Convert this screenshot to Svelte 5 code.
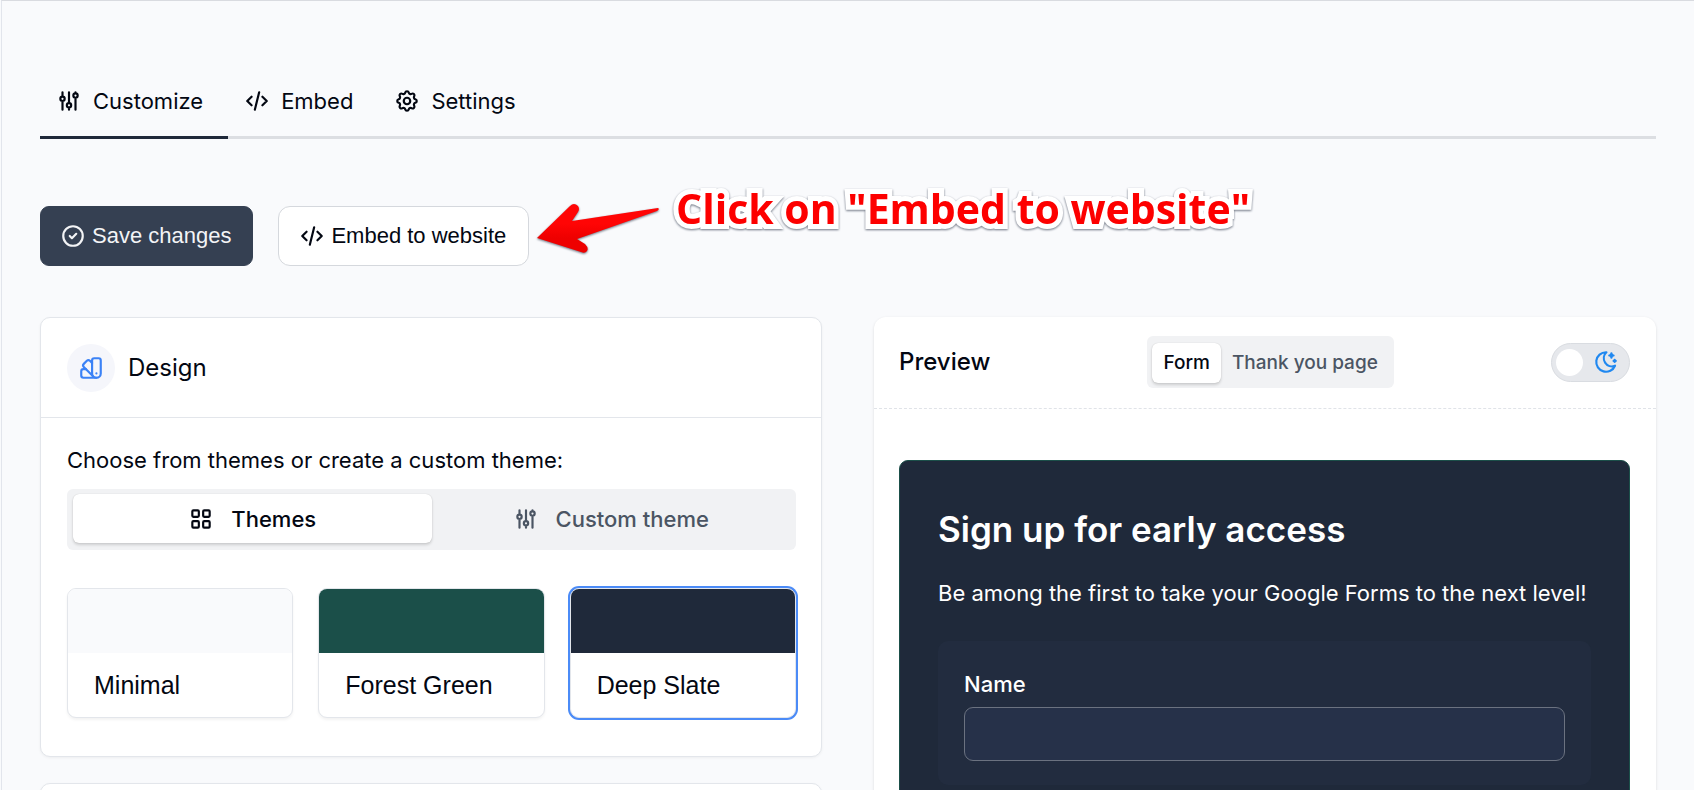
<script lang="ts">
  type IconName = "adjustments" | "code" | "settings" | "check" | "swatch" | "grid" | "moon";

  const tabs: { id: string; label: string; icon: IconName }[] = [
    { id: "customize", label: "Customize", icon: "adjustments" },
    { id: "embed", label: "Embed", icon: "code" },
    { id: "settings", label: "Settings", icon: "settings" },
  ];

  const sources: { id: string; label: string; icon: IconName }[] = [
    { id: "themes", label: "Themes", icon: "grid" },
    { id: "custom", label: "Custom theme", icon: "adjustments" },
  ];

  const themes = [
    { name: "Minimal", color: "#f9fafc" },
    { name: "Forest Green", color: "#1b4f49" },
    { name: "Deep Slate", color: "#1f293a" },
  ];

  const pages = ["Form", "Thank you page"];

  let activeTab = $state("customize");
  let source = $state("themes");
  let theme = $state("Deep Slate");
  let page = $state("Form");
  let darkMode = $state(false);
  let name = $state("");
</script>

{#snippet icon(kind: IconName)}
  <svg class="icon" viewBox="0 0 24 24" aria-hidden="true">
    {#if kind === "adjustments"}
      <path d="M4 10a2 2 0 1 0 4 0a2 2 0 0 0 -4 0M6 4v4M6 12v8" />
      <path d="M10 16a2 2 0 1 0 4 0a2 2 0 0 0 -4 0M12 4v10M12 18v2" />
      <path d="M16 7a2 2 0 1 0 4 0a2 2 0 0 0 -4 0M18 4v1M18 9v11" />
    {:else if kind === "code"}
      <path d="M7 8l-4 4l4 4M17 8l4 4l-4 4M14 4l-4 16" />
    {:else if kind === "settings"}
      <path
        d="M10.325 4.317c.426 -1.756 2.924 -1.756 3.35 0a1.724 1.724 0 0 0 2.573 1.066c1.543 -.94 3.31 .826 2.37 2.37a1.724 1.724 0 0 0 1.065 2.572c1.756 .426 1.756 2.924 0 3.35a1.724 1.724 0 0 0 -1.066 2.573c.94 1.543 -.826 3.31 -2.37 2.37a1.724 1.724 0 0 0 -2.572 1.065c-.426 1.756 -2.924 1.756 -3.35 0a1.724 1.724 0 0 0 -2.573 -1.066c-1.543 .94 -3.31 -.826 -2.37 -2.37a1.724 1.724 0 0 0 -1.065 -2.572c-1.756 -.426 -1.756 -2.924 0 -3.35a1.724 1.724 0 0 0 1.066 -2.573c-.94 -1.543 .826 -3.31 2.37 -2.37c1 .608 2.296 .07 2.572 -1.065z"
      />
      <circle cx="12" cy="12" r="3" />
    {:else if kind === "check"}
      <circle cx="12" cy="12" r="9" />
      <path d="M9 12l2 2l4 -4" />
    {:else if kind === "swatch"}
      <path d="M19 3h-4a2 2 0 0 0 -2 2v12a4 4 0 0 0 8 0v-12a2 2 0 0 0 -2 -2" />
      <path d="M13 7.35l-2 -2a2 2 0 0 0 -2.828 0l-2.828 2.828a2 2 0 0 0 0 2.828l9 9" />
      <path d="M7.3 13h-2.3a2 2 0 0 0 -2 2v4a2 2 0 0 0 2 2h12M17 17v.01" />
    {:else if kind === "grid"}
      <rect x="4" y="4" width="6" height="6" rx="1" />
      <rect x="14" y="4" width="6" height="6" rx="1" />
      <rect x="4" y="14" width="6" height="6" rx="1" />
      <rect x="14" y="14" width="6" height="6" rx="1" />
    {:else if kind === "moon"}
      <path d="M12 3c.132 0 .263 0 .393 0a7.5 7.5 0 0 0 7.92 12.446a9 9 0 1 1 -8.313 -12.454z" />
      <path
        d="M17 4a2 2 0 0 0 2 2a2 2 0 0 0 -2 2a2 2 0 0 0 -2 -2a2 2 0 0 0 2 -2M19 11h2m-1 -1v2"
      />
    {/if}
  </svg>
{/snippet}

<main class="shell">
  <nav class="tabs">
    {#each tabs as tab (tab.id)}
      <button class="tab" class:active={activeTab === tab.id} onclick={() => (activeTab = tab.id)}>
        {@render icon(tab.icon)}
        <span>{tab.label}</span>
      </button>
    {/each}
  </nav>

  <div class="actions">
    <button class="action save">{@render icon("check")}<span>Save changes</span></button>
    <button class="action">{@render icon("code")}<span>Embed to website</span></button>
    <div class="callout">
      <svg class="arrow" viewBox="0 0 124 50" aria-hidden="true">
        <defs>
          <linearGradient id="arrow-red" x1="0" y1="0" x2="0" y2="1">
            <stop offset="0.4" stop-color="#ff0505" />
            <stop offset="0.7" stop-color="#ee0000" />
          </linearGradient>
        </defs>
        <path
          d="M1 35L34 3Q38 -1 42 3Q44 6 42 9L36 18L122 5Q124 6 121 8L41 36L49 41Q53 45 51 48Q49 51 45 49Z"
          fill="url(#arrow-red)"
        />
      </svg>
      <strong>Click on "Embed to website"</strong>
    </div>
  </div>

  <div class="columns">
    <div class="stack">
      <section class="card">
        <header class="card-header">
          <span class="badge">{@render icon("swatch")}</span>
          <h2>Design</h2>
        </header>
        <div class="card-body">
          <p>Choose from themes or create a custom theme:</p>
          <div class="segments wide">
            {#each sources as item (item.id)}
              <button
                class="segment"
                class:active={source === item.id}
                onclick={() => (source = item.id)}
              >
                {@render icon(item.icon)}
                <span>{item.label}</span>
              </button>
            {/each}
          </div>
          <div class="themes">
            {#each themes as item (item.name)}
              <button
                class="theme"
                class:selected={theme === item.name}
                onclick={() => (theme = item.name)}
              >
                <span class="swatch" style:background-color={item.color}></span>
                <span class="theme-name">{item.name}</span>
              </button>
            {/each}
          </div>
        </div>
      </section>
      <section class="card next"></section>
    </div>

    <section class="preview">
      <header class="preview-header">
        <h2>Preview</h2>
        <div class="segments">
          {#each pages as item (item)}
            <button class="segment" class:active={page === item} onclick={() => (page = item)}>
              {item}
            </button>
          {/each}
        </div>
        <label class="toggle">
          <input type="checkbox" aria-label="Dark mode" bind:checked={darkMode} />
          <span class="knob"></span>
          {@render icon("moon")}
        </label>
      </header>
      <div class="preview-body">
        <form class="form">
          <h1>Sign up for early access</h1>
          <p>Be among the first to take your Google Forms to the next level!</p>
          <div class="field">
            <label for="name">Name</label>
            <input id="name" type="text" bind:value={name} />
          </div>
        </form>
      </div>
    </section>
  </div>
</main>

<style>
  :global(body) {
    margin: 0;
    background: #f9fafc;
  }

  .shell {
    box-sizing: border-box;
    height: 100vh;
    overflow: hidden;
    margin-left: 1px;
    padding: 64px 38px 0;
    border-top: 1px solid #d9dbe0;
    border-left: 1px solid #e2e5ec;
    background: #f9fafc;
    color: #030712;
    font-family: Inter, "Liberation Sans", sans-serif;
    font-size: 22px;
    line-height: 32px;
  }

  h1,
  h2,
  p {
    margin: 0;
  }

  button {
    margin: 0;
    padding: 0;
    border: none;
    background: none;
    color: inherit;
    font: inherit;
    cursor: pointer;
  }

  .icon {
    flex: none;
    width: 26px;
    height: 26px;
    fill: none;
    stroke: currentColor;
    stroke-width: 2;
    stroke-linecap: round;
    stroke-linejoin: round;
  }

  .tabs {
    display: flex;
    box-shadow: inset 0 -3px #dcdee2;
  }

  .tab {
    display: flex;
    align-items: center;
    gap: 11px;
    height: 74px;
    padding: 0 25px 0 16px;
    border-bottom: 3px solid transparent;
  }

  .tab.active {
    border-color: #1f293a;
  }

  .actions {
    position: relative;
    display: flex;
    gap: 25px;
    margin: 67px 0 51px;
    font-family: "Liberation Sans", Arial, sans-serif;
  }

  .action {
    display: flex;
    align-items: center;
    gap: 6px;
    box-sizing: border-box;
    height: 60px;
    padding: 0 22px 0 20px;
    border: 1px solid #d5d8dd;
    border-radius: 12px;
    background: #fff;
  }

  .action.save {
    padding: 0 21px 0 19px;
    border-color: #354052;
    border-radius: 9px;
    background: #354052;
    color: #f3f4f6;
  }

  .callout {
    position: absolute;
    left: 496px;
    top: -28px;
    display: flex;
    gap: 16px;
    filter: drop-shadow(0 1px 1px #6b7280);
    color: #fd0000;
    font-family: "Open Sans", sans-serif;
    font-size: 41px;
    line-height: 60px;
    white-space: nowrap;
    pointer-events: none;
  }

  .callout strong {
    font-weight: 700;
    -webkit-text-stroke: 10px #fff;
    paint-order: stroke fill;
    stroke-linejoin: round;
  }

  .arrow {
    width: 124px;
    height: 50px;
    margin-top: 25px;
  }

  .columns {
    display: grid;
    grid-template-columns: 1fr 1fr;
    gap: 52px;
    align-items: start;
  }

  .stack {
    display: grid;
    gap: 26px;
  }

  .card {
    border: 1px solid #e3e6eb;
    border-radius: 10px;
    background: #fff;
    box-shadow: 0 1px 3px #0000000d;
  }

  .card.next {
    min-height: 100px;
  }

  .card-header {
    display: flex;
    align-items: center;
    gap: 13px;
    padding: 26px 26px 25px;
    border-bottom: 1px solid #e3e6eb;
  }

  .badge {
    display: grid;
    place-items: center;
    width: 48px;
    height: 48px;
    border-radius: 50%;
    background: #f5f6fb;
    color: #3b82f6;
  }

  h2 {
    font-size: 24px;
    font-weight: 400;
  }

  .card-body {
    padding: 26px 25px 38px 26px;
  }

  .segments {
    display: flex;
    box-sizing: border-box;
    padding: 7px 5px 5px;
    border-radius: 6px;
    background: #f1f2f4;
    font-size: 19px;
    font-weight: 500;
  }

  .segment {
    display: flex;
    align-items: center;
    justify-content: center;
    height: 40px;
    padding: 0 11px;
    border-radius: 6px;
    color: #4b5563;
  }

  .segment.active {
    background: #fff;
    box-shadow: 0 2px 3px #00000026, 0 0 1px #00000033;
    color: #030712;
  }

  .segments.wide {
    margin: 13px 0 38px;
    padding: 5px 6px 7px;
    font-size: 22px;
  }

  .wide .segment {
    flex: 1 1 auto;
    gap: 17px;
    height: 49px;
    flex-basis: 0;
  }

  .themes {
    display: grid;
    grid-template-columns: repeat(3, 1fr);
    gap: 25px;
    font-family: "Liberation Sans", Arial, sans-serif;
    font-size: 25px;
  }

  .theme {
    display: flex;
    flex-direction: column;
    overflow: hidden;
    border: 1px solid #e3e6eb;
    border-radius: 9px;
    background: #fff;
    box-shadow: 0 2px 3px #0000000d;
    text-align: left;
  }

  .theme.selected {
    box-shadow: 0 0 0 2px #4b8bf7;
  }

  .swatch {
    height: 64px;
  }

  .theme-name {
    padding: 16px 26px;
  }

  .preview {
    min-height: 600px;
    border-radius: 12px;
    background: #fff;
    box-shadow: 0 1px 3px #0000001f;
  }

  .preview-header {
    display: flex;
    align-items: center;
    justify-content: space-between;
    padding: 19px 26px 20px 25px;
    border-bottom: 1px dashed #e0e3e8;
  }

  .preview-header h2 {
    font-weight: 500;
  }

  .toggle {
    position: relative;
    display: flex;
    align-items: center;
    justify-content: space-between;
    box-sizing: border-box;
    width: 79px;
    height: 39px;
    padding: 0 10px 0 4px;
    border: 1px solid #d9dce1;
    border-radius: 20px;
    background: #e6e8ec;
    color: #2088f0;
    cursor: pointer;
  }

  .toggle input {
    position: absolute;
    inset: 0;
    margin: 0;
    opacity: 0;
    cursor: pointer;
  }

  .knob {
    width: 27px;
    height: 27px;
    border-radius: 50%;
    background: #fff;
  }

  .preview-body {
    padding: 51px 26px 51px 25px;
  }

  .form {
    padding: 38px;
    border: 1px solid #1b4f49;
    border-radius: 9px;
    background: #1f293a;
    color: #fff;
  }

  .form h1 {
    font-size: 35px;
    font-weight: 600;
    line-height: 60px;
  }

  .form p {
    margin: 18px 0 32px;
  }

  .field {
    display: grid;
    gap: 7px;
    padding: 27px 26px 24px;
    border-radius: 10px;
    background: #222c3f;
  }

  .field label {
    font-weight: 500;
  }

  .field input {
    box-sizing: border-box;
    width: 100%;
    height: 54px;
    padding: 0 16px;
    border: 1px solid #6b7280;
    border-radius: 9px;
    background: #263149;
    color: inherit;
    font: inherit;
  }
</style>
